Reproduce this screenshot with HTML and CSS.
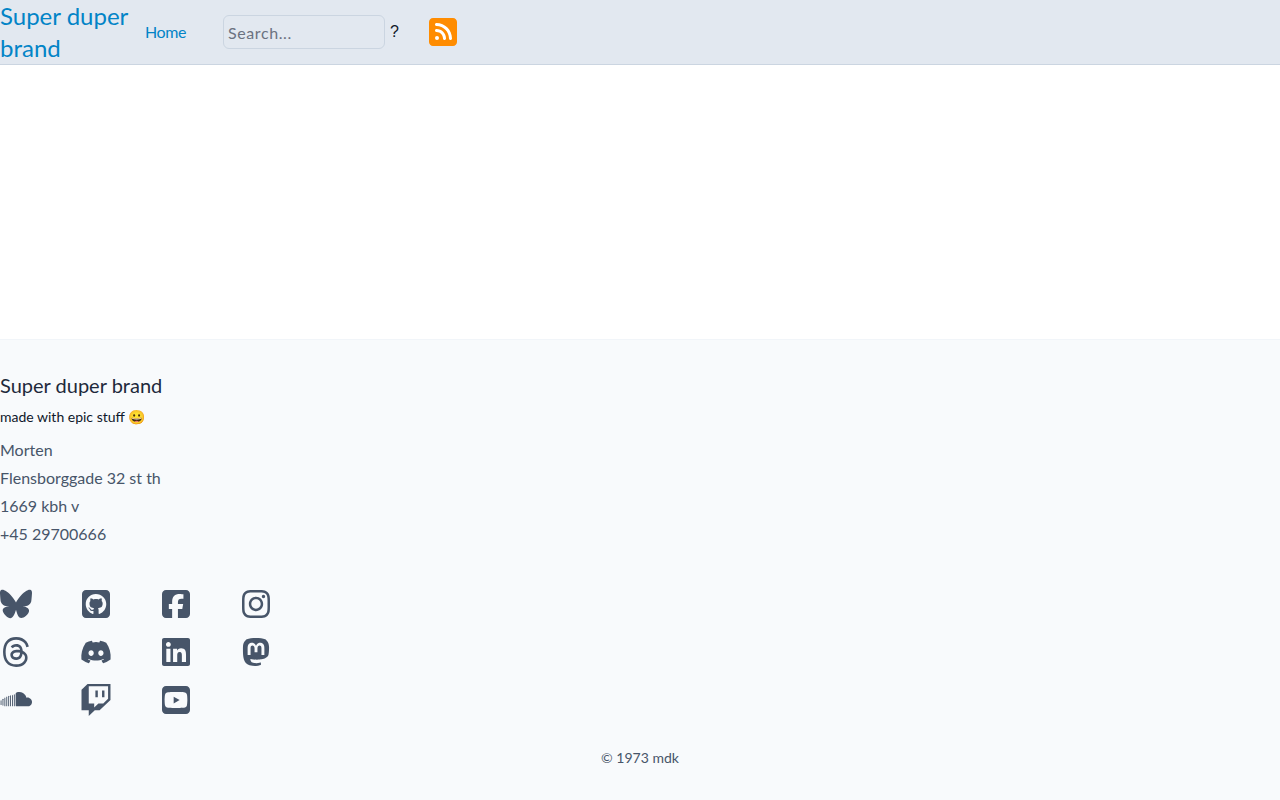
FILE: index.html
```html
<!DOCTYPE html>
<html lang="en">
<head>
  <meta charset="UTF-8">
  <meta name="viewport" content="width=device-width, initial-scale=1.0"/>
  <title>Super duper brand</title>
  <link rel="stylesheet" href="styles.css">
</head>
<body>

  <header>
    <a class="logo" href="#">Super duper brand</a>
    <nav>
      <a href="#">Home</a>
    </nav>
    <form class="search">
      <input type="text" placeholder="Search...">
      <span class="help">?</span>
    </form>
    <a class="rss" href="#" aria-label="RSS">
      <svg viewBox="0 0 448 512">
        <rect x="40" y="80" width="360" height="340" fill="#fff"/>
        <path fill="#ff8c00" d="M64 32C28.7 32 0 60.7 0 96V416c0 35.3 28.7 64 64 64H384c35.3 0 64-28.7 64-64V96c0-35.3-28.7-64-64-64H64zM96 136c0-13.3 10.7-24 24-24c137 0 248 111 248 248c0 13.3-10.7 24-24 24s-24-10.7-24-24c0-110.5-89.5-200-200-200c-13.3 0-24-10.7-24-24zm0 96c0-13.3 10.7-24 24-24c83.9 0 152 68.1 152 152c0 13.3-10.7 24-24 24s-24-10.7-24-24c0-57.4-46.6-104-104-104c-13.3 0-24-10.7-24-24zm0 120a32 32 0 1 1 64 0 32 32 0 1 1 -64 0z"/>
      </svg>
    </a>
  </header>

  <main></main>

  <footer>
    <h2>Super duper brand</h2>
    <p class="tagline">made with epic stuff 😀</p>
    <address>
      Morten<br>
      Flensborggade 32 st th<br>
      1669 kbh v<br>
      +45 29700666
    </address>

    <!-- Social links -->
    <div class="socials">
      <a href="#" aria-label="Bluesky"><svg viewBox="0 0 576 512"><path d="M407.8 294.7c-3.3-.4-6.7-.8-10-1.3c3.4 .4 6.7 .9 10 1.3zM288 227.1C261.9 176.4 190.9 81.9 124.9 35.3C61.6-9.4 37.5-1.7 21.6 5.5C3.3 13.8 0 41.9 0 58.4S9.1 194 15 213.9c19.5 65.7 89.1 87.9 153.2 80.7c3.3-.5 6.6-.9 10-1.4c-3.3 .5-6.6 1-10 1.4C74.3 308.6-9.1 342.8 100.3 464.5C220.6 589.1 265.1 437.8 288 361.1c22.9 76.7 49.2 222.5 185.6 103.4c102.4-103.4 28.1-156-65.8-169.9c-3.3-.4-6.7-.8-10-1.3c3.4 .4 6.7 .9 10 1.3c64.1 7.1 133.6-15.1 153.2-80.7C566.9 194 576 75 576 58.4s-3.3-44.7-21.6-52.9c-15.8-7.1-40-14.9-103 29.8C385.1 81.9 314.1 176.4 288 227.1z"/></svg></a>
      <a href="#" aria-label="GitHub"><svg viewBox="0 0 448 512"><path d="M448 96c0-35.3-28.7-64-64-64H64C28.7 32 0 60.7 0 96V416c0 35.3 28.7 64 64 64H384c35.3 0 64-28.7 64-64V96zM265.8 407.7c0-1.8 0-6 .1-11.6c.1-11.4 .1-28.8 .1-43.7c0-15.6-5.2-25.5-11.3-30.7c37-4.1 76-9.2 76-73.1c0-18.2-6.5-27.3-17.1-39c1.7-4.3 7.4-22-1.7-45c-13.9-4.3-45.7 17.9-45.7 17.9c-13.2-3.7-27.5-5.6-41.6-5.6s-28.4 1.9-41.6 5.6c0 0-31.8-22.2-45.7-17.9c-9.1 22.9-3.5 40.6-1.7 45c-10.6 11.7-15.6 20.8-15.6 39c0 63.6 37.3 69 74.3 73.1c-4.8 4.3-9.1 11.7-10.6 22.3c-9.5 4.3-33.8 11.7-48.3-13.9c-9.1-15.8-25.5-17.1-25.5-17.1c-16.2-.2-1.1 10.2-1.1 10.2c10.8 5 18.4 24.2 18.4 24.2c9.7 29.7 56.1 19.7 56.1 19.7c0 9 .1 21.7 .1 30.6c0 4.8 .1 8.6 .1 10c0 4.3-3 9.5-11.5 8C106 393.6 59.8 330.8 59.8 257.4c0-91.8 70.2-161.5 162-161.5s166.2 69.7 166.2 161.5c.1 73.4-44.7 136.3-110.7 158.3c-8.4 1.5-11.5-3.7-11.5-8z"/></svg></a>
      <a href="#" aria-label="Facebook"><svg viewBox="0 0 448 512"><path d="M64 32C28.7 32 0 60.7 0 96V416c0 35.3 28.7 64 64 64h98.2V334.2H109.4V256h52.8V222.3c0-87.1 39.4-127.5 125-127.5c16.2 0 44.2 3.2 55.7 6.4V172c-6-.6-16.5-1-29.6-1c-42 0-58.2 15.9-58.2 57.2V256h83.6l-14.4 78.2H255V480H384c35.3 0 64-28.7 64-64V96c0-35.3-28.7-64-64-64H64z"/></svg></a>
      <a href="#" aria-label="Instagram"><svg viewBox="0 0 448 512"><path d="M224.1 141c-63.6 0-114.9 51.3-114.9 114.9s51.3 114.9 114.9 114.9S339 319.5 339 255.9 287.7 141 224.1 141zm0 189.6c-41.1 0-74.7-33.5-74.7-74.7s33.5-74.7 74.7-74.7 74.7 33.5 74.7 74.7-33.6 74.7-74.7 74.7zm146.4-194.3c0 14.9-12 26.8-26.8 26.8-14.9 0-26.8-12-26.8-26.8s12-26.8 26.8-26.8 26.8 12 26.8 26.8zm76.1 27.2c-1.7-35.9-9.9-67.7-36.2-93.9-26.2-26.2-58-34.4-93.9-36.2-37-2.1-147.9-2.1-184.9 0-35.8 1.7-67.6 9.9-93.9 36.1s-34.4 58-36.2 93.9c-2.1 37-2.1 147.9 0 184.9 1.7 35.9 9.9 67.7 36.2 93.9s58 34.4 93.9 36.2c37 2.1 147.9 2.1 184.9 0 35.9-1.7 67.7-9.9 93.9-36.2 26.2-26.2 34.4-58 36.2-93.9 2.1-37 2.1-147.8 0-184.8zM398.8 388c-7.8 19.6-22.9 34.7-42.6 42.6-29.5 11.7-99.5 9-132.1 9s-102.7 2.6-132.1-9c-19.6-7.8-34.7-22.9-42.6-42.6-11.7-29.5-9-99.5-9-132.1s-2.6-102.7 9-132.1c7.8-19.6 22.9-34.7 42.6-42.6 29.5-11.7 99.5-9 132.1-9s102.7-2.6 132.1 9c19.6 7.8 34.7 22.9 42.6 42.6 11.7 29.5 9 99.5 9 132.1s2.7 102.7-9 132.1z"/></svg></a>
      <a href="#" aria-label="Threads"><svg viewBox="0 0 448 512"><path d="M331.5 235.7c2.2 .9 4.2 1.9 6.3 2.8c29.2 14.1 50.6 35.2 61.8 61.4c15.7 36.5 17.2 95.8-30.3 143.2c-36.2 36.2-80.3 52.5-142.6 53h-.3c-70.2-.5-124.1-24.1-160.4-70.2c-32.3-41-48.9-98.1-49.5-169.6V256v-.2C17 184.3 33.6 127.2 65.9 86.2C102.2 40.1 156.2 16.5 226.4 16h.3c70.3 .5 124.9 24 162.3 69.9c18.4 22.7 32 50 40.6 81.7l-40.4 10.8c-7.1-25.8-17.8-47.8-32.2-65.4c-29.2-35.8-73-54.2-130.5-54.6c-57 .5-100.1 18.8-128.2 54.4C72.1 146.1 58.5 194.3 58 256c.5 61.7 14.1 109.9 40.3 143.3c28 35.6 71.2 53.9 128.2 54.4c51.4-.4 85.4-12.6 113.7-40.9c32.3-32.2 31.7-71.8 21.4-95.9c-6.1-14.2-17.1-26-31.9-34.9c-3.7 26.9-11.8 48.3-24.7 64.8c-17.1 21.8-41.4 33.6-72.7 35.3c-23.6 1.3-46.3-4.4-63.9-16c-20.8-13.8-33-34.8-34.3-59.3c-2.5-48.3 35.7-83 95.2-86.4c21.1-1.2 40.9-.3 59.2 2.8c-2.4-14.8-7.3-26.6-14.6-35.2c-10-11.7-25.6-17.7-46.2-17.8H227c-16.6 0-39 4.6-53.3 26.3l-34.4-23.6c19.2-29.1 50.3-45.1 87.8-45.1h.8c62.6 .4 99.9 39.5 103.7 107.7l-.2 .2zm-156 68.8c1.3 25.1 28.4 36.8 54.6 35.3c25.6-1.4 54.6-11.4 59.5-73.2c-13.2-2.9-27.8-4.4-43.4-4.4c-4.8 0-9.6 .1-14.4 .4c-42.9 2.4-57.2 23.2-56.2 41.8l-.1 .1z"/></svg></a>
      <a href="#" aria-label="Discord"><svg viewBox="0 0 640 512"><path d="M524.531,69.836a1.5,1.5,0,0,0-.764-.7A485.065,485.065,0,0,0,404.081,32.03a1.816,1.816,0,0,0-1.923.91,337.461,337.461,0,0,0-14.9,30.6,447.848,447.848,0,0,0-134.426,0,309.541,309.541,0,0,0-15.135-30.6,1.89,1.89,0,0,0-1.924-.91A483.689,483.689,0,0,0,116.085,69.137a1.712,1.712,0,0,0-.788.676C39.068,183.651,18.186,294.69,28.43,404.354a2.016,2.016,0,0,0,.765,1.375A487.666,487.666,0,0,0,176.02,479.918a1.9,1.9,0,0,0,2.063-.676A348.2,348.2,0,0,0,208.12,430.4a1.86,1.86,0,0,0-1.019-2.588,321.173,321.173,0,0,1-45.868-21.853,1.885,1.885,0,0,1-.185-3.126c3.082-2.309,6.166-4.711,9.109-7.137a1.819,1.819,0,0,1,1.9-.256c96.229,43.917,200.41,43.917,295.5,0a1.812,1.812,0,0,1,1.924.233c2.944,2.426,6.027,4.851,9.132,7.16a1.884,1.884,0,0,1-.162,3.126,301.407,301.407,0,0,1-45.89,21.83,1.875,1.875,0,0,0-1,2.611,391.055,391.055,0,0,0,30.014,48.815,1.864,1.864,0,0,0,2.063.7A486.048,486.048,0,0,0,610.7,405.729a1.882,1.882,0,0,0,.765-1.352C623.729,277.594,590.933,167.465,524.531,69.836ZM222.491,337.58c-28.972,0-52.844-26.587-52.844-59.239S193.056,219.1,222.491,219.1c29.665,0,53.306,26.82,52.843,59.239C275.334,310.993,251.924,337.58,222.491,337.58Zm195.38,0c-28.971,0-52.843-26.587-52.843-59.239S388.437,219.1,417.871,219.1c29.667,0,53.307,26.82,52.844,59.239C470.715,310.993,447.538,337.58,417.871,337.58Z"/></svg></a>
      <a href="#" aria-label="LinkedIn"><svg viewBox="0 0 448 512"><path d="M416 32H31.9C14.3 32 0 46.5 0 64.3v383.4C0 465.5 14.3 480 31.9 480H416c17.6 0 32-14.5 32-32.3V64.3c0-17.8-14.4-32.3-32-32.3zM135.4 416H69V202.2h66.5V416zm-33.2-243c-21.3 0-38.5-17.3-38.5-38.5S80.9 96 102.2 96c21.2 0 38.5 17.3 38.5 38.5 0 21.3-17.2 38.5-38.5 38.5zm282.1 243h-66.4V312c0-24.8-.5-56.7-34.5-56.7-34.6 0-39.9 27-39.9 54.9V416h-66.4V202.2h63.7v29.2h.9c8.9-16.8 30.6-34.5 62.9-34.5 67.2 0 79.7 44.3 79.7 101.9V416z"/></svg></a>
      <a href="#" aria-label="Mastodon"><svg viewBox="0 0 448 512"><path d="M433 179.11c0-97.2-63.71-125.7-63.71-125.7-62.52-28.7-228.56-28.4-290.48 0 0 0-63.72 28.5-63.72 125.7 0 115.7-6.6 259.4 105.63 289.1 40.51 10.7 75.32 13 103.33 11.4 50.81-2.8 79.32-18.1 79.32-18.1l-1.7-36.9s-36.31 11.4-77.12 10.1c-40.41-1.4-83-4.4-89.63-54a102.54 102.54 0 0 1-.9-13.9c85.63 20.9 158.65 9.1 178.75 6.7 56.12-6.7 105-41.3 111.23-72.9 9.8-49.8 9-121.5 9-121.5zm-75.12 125.2h-46.63v-114.2c0-49.7-64-51.6-64 6.9v62.5h-46.33V197c0-58.5-64-56.6-64-6.9v114.2H90.19c0-122.1-5.2-147.9 18.41-175 25.9-28.9 79.82-30.8 103.83 6.1l11.6 19.5 11.6-19.5c24.11-37.1 78.12-34.8 103.83-6.1 23.71 27.3 18.4 53 18.4 175z"/></svg></a>
      <a href="#" aria-label="SoundCloud"><svg viewBox="0 0 640 512"><path d="M640 298.6c-1.3 23.1-11.5 44.8-28.4 60.5s-39.2 24.4-62.3 24.1H331c-10 0-18-8-18-18V130c0-8 4-15 12-19 0 0 20-14 62-14 26 0 51 7 73 20 17 10 32 24 44 40s20 35 24 54c8-2 15-3 23-3 12 0 23 2 34 7s21 11 30 20 15 18 19 29 6 23 6 34z"/><rect x="278" y="140" width="18" height="243" rx="9"/><rect x="240" y="150" width="18" height="233" rx="9"/><rect x="202" y="158" width="18" height="225" rx="9"/><rect x="164" y="172" width="18" height="211" rx="9"/><rect x="126" y="186" width="18" height="197" rx="9"/><rect x="88" y="205" width="18" height="178" rx="9"/><rect x="50" y="232" width="18" height="140" rx="9"/><rect x="12" y="262" width="18" height="96" rx="9"/></svg></a>
      <a href="#" aria-label="Twitch"><svg viewBox="0 0 512 512"><path d="M391.17,103.47H352.54v109.7h38.63ZM285,103H246.37V212.75H285ZM120.83,0,24.31,91.42V420.58H140.14V512l96.53-91.42h77.25L487.69,256V0ZM449.07,237.75l-77.22,73.12H294.61l-67.6,64v-64H140.14V36.58H449.07Z"/></svg></a>
      <a href="#" aria-label="YouTube"><svg viewBox="0 0 448 512"><path d="M282 256.2l-95.2-54.1V310.3L282 256.2zM384 32H64C28.7 32 0 60.7 0 96V416c0 35.3 28.7 64 64 64H384c35.3 0 64-28.7 64-64V96c0-35.3-28.7-64-64-64zm14.4 136.1c7.6 28.6 7.6 88.2 7.6 88.2s0 59.6-7.6 88.1c-4.2 15.8-16.5 27.7-32.2 31.9C337.9 384 224 384 224 384s-113.9 0-142.2-7.6c-15.7-4.2-28-16.1-32.2-31.9C42 315.9 42 256.3 42 256.3s0-59.7 7.6-88.2c4.2-15.8 16.5-28.2 32.2-32.4C110.1 128 224 128 224 128s113.9 0 142.2 7.7c15.7 4.2 28 16.6 32.2 32.4z"/></svg></a>
    </div>

    <p class="copyright">© 1973 mdk</p>
  </footer>

</body>
</html>
```
FILE: styles.css
```css
/* Global Styles */
* {
  margin: 0;
  padding: 0;
  box-sizing: border-box;
}

body {
  font-family: Lato, "Liberation Sans", sans-serif;
  font-size: 16px;
  line-height: 24px;
  background-color: #fff;
  min-height: 100vh;
  display: flex;
  flex-direction: column;
}

/* Header */
header {
  display: flex;
  align-items: center;
  height: 65px;
  background: #e2e8f0;
  border-bottom: 1px solid #cbd5e1;
}

.logo {
  flex: none;
  width: 129px;
  font-size: 24px;
  line-height: 32px;
  color: #0284c7;
  text-decoration: none;
}

nav {
  display: flex;
  width: 94px;
  padding-left: 16px;
}

nav a {
  color: #0284c7;
  text-decoration: none;
  letter-spacing: -0.4px;
}

.search {
  display: flex;
  align-items: center;
  gap: 5px;
  width: 206px;
}

.search input {
  width: 162px;
  height: 34px;
  padding: 4px;
  font: inherit;
  letter-spacing: 0.6px;
  background: #e2e8f0;
  border: 1px solid #cbd5e1;
  border-radius: 6px;
}

.search input::placeholder {
  color: #6b7280;
}

.help {
  font-family: "Liberation Sans", sans-serif;
  color: #0f172a;
}

.rss {
  display: flex;
}

.rss svg {
  height: 32px;
  width: 28px;
}

main {
  flex: 1;
}

/* Footer */
footer {
  background: #f8fafc;
  border-top: 1px solid #f1f5f9;
  padding: 32px 0;
  color: #475569;
}

footer h2 {
  font-size: 20px;
  font-weight: 400;
  line-height: 26px;
  color: #1e293b;
}

.tagline {
  margin-top: 10px;
  font-size: 14px;
  line-height: 18px;
  color: #0f172a;
}

address {
  margin-top: 10px;
  font-style: normal;
  line-height: 28px;
}

.socials {
  display: grid;
  grid-template-columns: repeat(4, 32px);
  gap: 16px 48px;
  margin-top: 40px;
}

.socials a {
  display: flex;
  justify-content: center;
  height: 32px;
}

.socials svg {
  height: 32px;
  fill: #475569;
}

.copyright {
  margin-top: 32px;
  font-size: 14px;
  line-height: 20px;
  text-align: center;
}
```
